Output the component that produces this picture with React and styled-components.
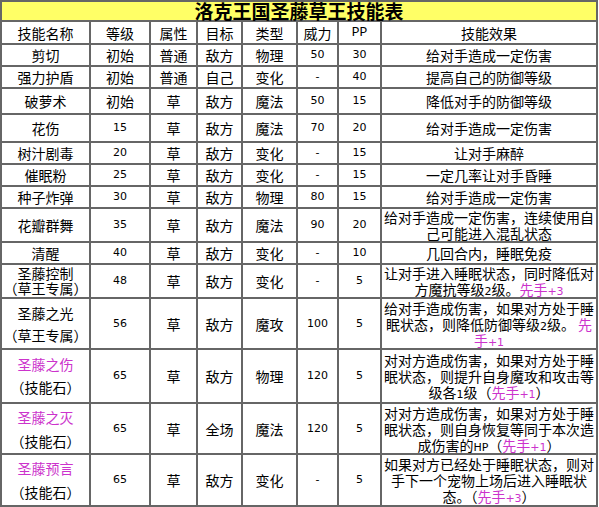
import React from 'react';
import styled, { createGlobalStyle } from 'styled-components';

const GlobalStyle = createGlobalStyle`
  html, body {
    margin: 0;
    padding: 0;
    background: #fff;
  }
  * {
    box-sizing: border-box;
  }
`;

const cols = [89, 60, 47, 45, 55, 41, 43, 216];

const headers = ['技能名称', '等级', '属性', '目标', '类型', '威力', 'PP', '技能效果'];

const skills = [
  { name: ['剪切'], lv: '初始', attr: '普通', target: '敌方', type: '物理', power: '50', pp: '30', effect: ['给对手造成一定伤害'], h: 22 },
  { name: ['强力护盾'], lv: '初始', attr: '普通', target: '自己', type: '变化', power: '-', pp: '40', effect: ['提高自己的防御等级'], h: 22 },
  { name: ['破萝术'], lv: '初始', attr: '草', target: '敌方', type: '魔法', power: '50', pp: '15', effect: ['降低对手的防御等级'], h: 26 },
  { name: ['花伤'], lv: '15', attr: '草', target: '敌方', type: '魔法', power: '70', pp: '20', effect: ['给对手造成一定伤害'], h: 28 },
  { name: ['树汁剧毒'], lv: '20', attr: '草', target: '敌方', type: '变化', power: '-', pp: '15', effect: ['让对手麻醉'], h: 22 },
  { name: ['催眠粉'], lv: '25', attr: '草', target: '敌方', type: '变化', power: '-', pp: '15', effect: ['一定几率让对手昏睡'], h: 22 },
  { name: ['种子炸弹'], lv: '30', attr: '草', target: '敌方', type: '物理', power: '80', pp: '15', effect: ['给对手造成一定伤害'], h: 22 },
  { name: ['花瓣群舞'], lv: '35', attr: '草', target: '敌方', type: '魔法', power: '90', pp: '20', effect: ['给对手造成一定伤害，连续使用自', '己可能进入混乱状态'], h: 34 },
  { name: ['清醒'], lv: '40', attr: '草', target: '敌方', type: '变化', power: '-', pp: '10', effect: ['几回合内，睡眠免疫'], h: 22 },
  { name: ['圣藤控制', '（草王专属）'], gap: 15, lv: '48', attr: '草', target: '敌方', type: '变化', power: '-', pp: '5', effect: ['让对手进入睡眠状态，同时降低对', '方魔抗等级2级。{先手+3}'], h: 34 },
  { name: ['圣藤之光', '（草王专属）'], gap: 22, lv: '56', attr: '草', target: '敌方', type: '魔攻', power: '100', pp: '5', effect: ['给对手造成伤害，如果对方处于睡', '眠状态，则降低防御等级2级。 {先}', '{手+1}'], h: 51 },
  { name: ['圣藤之伤', '（技能石）'], pink: true, gap: 23, lv: '65', attr: '草', target: '敌方', type: '物理', power: '120', pp: '5', effect: ['对对方造成伤害，如果对方处于睡', '眠状态，则提升自身魔攻和攻击等', '级各1级（{先手+1}）'], h: 54 },
  { name: ['圣藤之灭', '（技能石）'], pink: true, gap: 24, lv: '65', attr: '草', target: '全场', type: '魔法', power: '120', pp: '5', effect: ['对对方造成伤害，如果对方处于睡', '眠状态，则自身恢复等同于本次造', '成伤害的HP（{先手+1}）'], h: 51 },
  { name: ['圣藤预言', '（技能石）'], pink: true, gap: 24, lv: '65', attr: '草', target: '敌方', type: '变化', power: '-', pp: '5', effect: ['如果对方已经处于睡眠状态，则对', '手下一个宠物上场后进入睡眠状', '态。（{先手+3}）'], h: 52 },
];

const isNum = (s) => /^[\d-]+$/.test(s);

function renderText(str) {
  return str.split(/(\{[^}]*\})/).filter(Boolean).map((part, i) => {
    const pink = part.startsWith('{');
    const text = pink ? part.slice(1, -1) : part;
    const bits = text.split(/([A-Za-z0-9+]+)/).filter(Boolean).map((b, j) =>
      /^[A-Za-z0-9+]+$/.test(b) ? <Lat key={j}>{b}</Lat> : <React.Fragment key={j}>{b}</React.Fragment>
    );
    return pink ? <Pink key={i}>{bits}</Pink> : <React.Fragment key={i}>{bits}</React.Fragment>;
  });
}

function Cell({ value }) {
  return <Td $num={isNum(value)}>{value}</Td>;
}

function App() {
  return (
    <>
      <GlobalStyle />
      <Table>
        <colgroup>
          {cols.map((w, i) => <col key={i} style={{ width: w }} />)}
        </colgroup>
        <tbody>
          <Row $h={20}>
            <TitleCell colSpan={8}>洛克王国圣藤草王技能表</TitleCell>
          </Row>
          <Row $h={23}>
            {headers.map((h) => (
              h === 'PP' ? <Td key={h} $mono>{h}</Td> : <Td key={h}>{h}</Td>
            ))}
          </Row>
          {skills.map((s) => (
            <Row key={s.name[0]} $h={s.h}>
              <Td>
                {s.name.map((n, i) => (
                  <NameLine key={n} $pink={s.pink && i === 0} $lh={s.gap || 17}>{n}</NameLine>
                ))}
              </Td>
              <Cell value={s.lv} />
              <Cell value={s.attr} />
              <Cell value={s.target} />
              <Cell value={s.type} />
              <Cell value={s.power} />
              <Cell value={s.pp} />
              <EffectCell>
                {s.effect.map((line, i) => <EffectLine key={i}>{renderText(line)}</EffectLine>)}
              </EffectCell>
            </Row>
          ))}
        </tbody>
      </Table>
    </>
  );
}

const Table = styled.table`
  width: 598px;
  table-layout: fixed;
  border-collapse: separate;
  border-spacing: 0;
  border: 1px solid #666;
  font-family: "Noto Sans CJK SC", sans-serif;
  font-size: 14px;
  color: #000;
`;

const Row = styled.tr`
  height: ${(p) => p.$h}px;
`;

const Td = styled.td`
  border: 1px solid #666;
  padding: 0;
  text-align: center;
  vertical-align: middle;
  line-height: 16px;
  white-space: nowrap;
  overflow: hidden;
  font-family: ${(p) => (p.$mono ? '"Liberation Mono", monospace' : p.$num ? '"DejaVu Sans", sans-serif' : '"Noto Sans CJK SC", sans-serif')};
  font-size: ${(p) => (p.$num ? '11px' : p.$mono ? '13px' : '14px')};
`;

const TitleCell = styled.td`
  border: 1px solid #666;
  padding: 0;
  background: #ffff66;
  text-align: center;
  vertical-align: middle;
  font-size: 19px;
  font-weight: bold;
  line-height: 18px;
`;

const NameLine = styled.div`
  height: ${(p) => p.$lh}px;
  line-height: ${(p) => p.$lh}px;
  color: ${(p) => (p.$pink ? '#cc33cc' : '#000')};
`;

const EffectCell = styled.td`
  border: 1px solid #666;
  padding: 0;
  text-align: center;
  vertical-align: middle;
  white-space: nowrap;
  overflow: hidden;
`;

const EffectLine = styled.div`
  height: 16px;
  line-height: 16px;
`;

const Lat = styled.span`
  font-family: "DejaVu Sans", sans-serif;
  font-size: 11px;
  line-height: 1;
`;

const Pink = styled.span`
  color: #cc33cc;
`;

export default App;
